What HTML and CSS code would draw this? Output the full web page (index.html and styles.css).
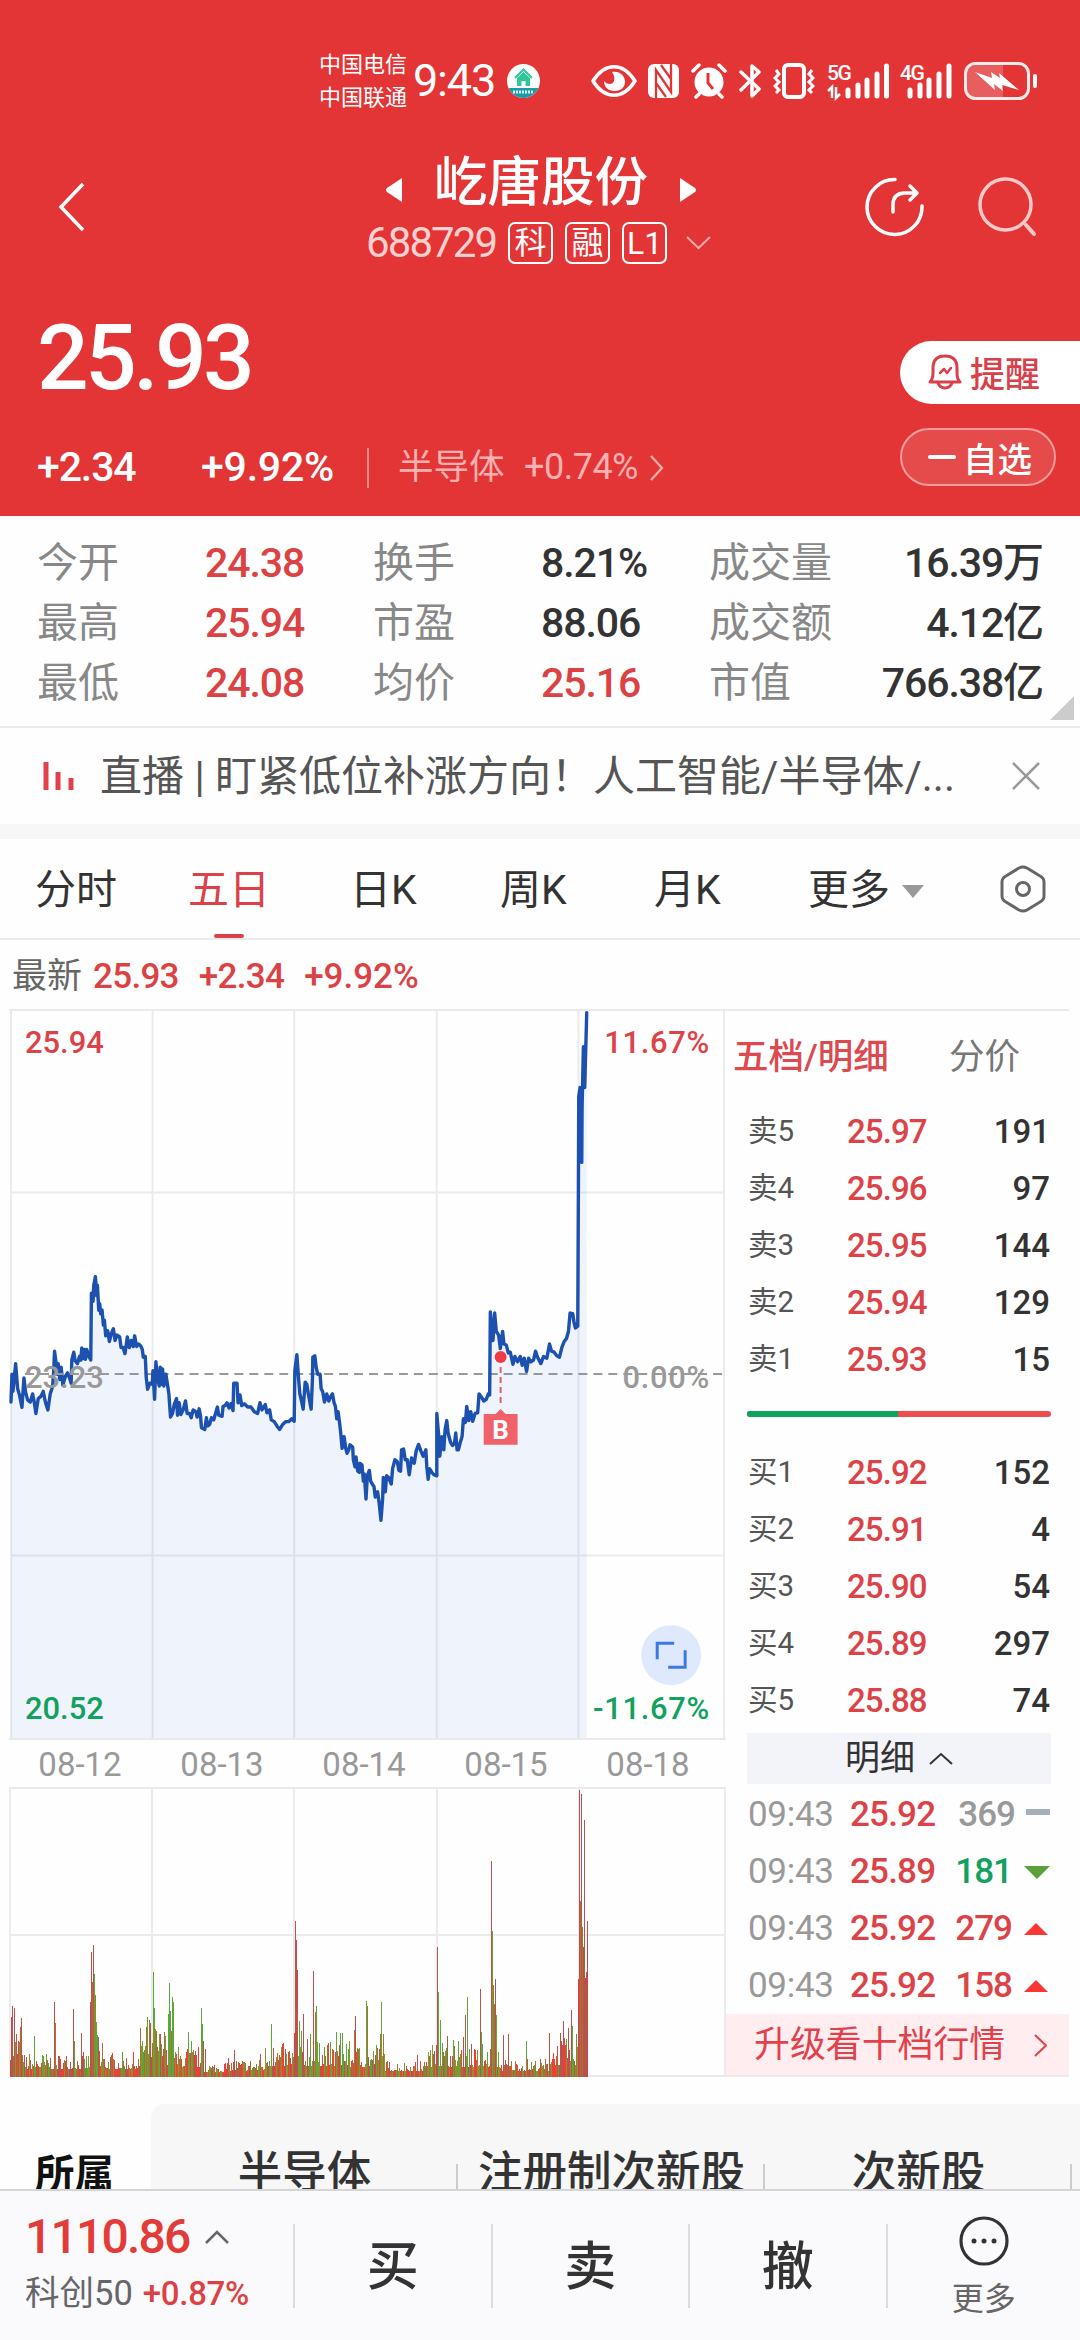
FILE: index.html
```html
<!DOCTYPE html>
<html lang="zh-CN">
<head>
  <meta charset="utf-8">
  <title>屹唐股份 688729</title>
  <link rel="stylesheet" href="styles.css">
</head>
<body>

<header class="top">
  <div class="status">
    <div class="carriers"><span>中国电信</span><span>中国联通</span></div>
    <span class="clock">9:43</span>
    <svg class="app-dot" width="33" height="34" viewBox="0 0 33 34">
      <clipPath id="dot"><ellipse cx="16.5" cy="17" rx="16.5" ry="17"/></clipPath>
      <g clip-path="url(#dot)">
        <rect width="33" height="34" fill="#fff"/>
        <rect y="24" width="33" height="10" fill="#1c9aa8"/>
        <path d="M8 14l8.500-8.500L25 14" fill="none" stroke="#2fc79a" stroke-width="2"/>
        <path d="M10 14l6.500-6 6.500 6v8h-4.500v-5h-4v5H10z" fill="#2fc79a"/>
        <path d="M6 28h21" stroke="#d8f3f3" stroke-width="3" stroke-dasharray="2 1"/>
      </g>
    </svg>
    <div class="sys-icons">
      <svg width="46" height="34" viewBox="0 0 46 34">
        <path d="M2 17C14-2 32-2 44 17 32 36 14 36 2 17z" fill="none" stroke="#fff" stroke-width="3.500" stroke-linejoin="round"/>
        <path d="M21 8c8-1 13 4 13 10 0 5-4 9-10 9-7 0-11-4-11-10 3 4 9 4 10 0 1-3 0-6-2-9z" fill="#fff"/>
      </svg>
      <svg width="31" height="34" viewBox="0 0 31 34">
        <rect width="31" height="34" rx="6" fill="#fff"/>
        <path d="M8 34V6l15 22V0M8 19l10 14M13 1l10 14" fill="none" stroke="#e33536" stroke-width="2.300"/>
      </svg>
      <svg width="36" height="36" viewBox="0 0 36 36">
        <circle cx="18" cy="19" r="14.500" fill="#fff"/>
        <path d="M2 8l6-6M34 8l-6-6M8 31l-3 3M28 31l3 3" stroke="#fff" stroke-width="3.500" stroke-linecap="round"/>
        <path d="M17 10v10l5 6" fill="none" stroke="#e33536" stroke-width="3"/>
      </svg>
      <svg width="23" height="36" viewBox="0 0 23 36">
        <path d="M2 9l18 17-7 7V3l7 6L2 27" fill="none" stroke="#fff" stroke-width="3.500" stroke-linejoin="round" stroke-linecap="round"/>
      </svg>
      <svg width="42" height="36" viewBox="0 0 42 36">
        <rect x="11" y="2" width="20" height="32" rx="4" fill="none" stroke="#fff" stroke-width="4"/>
        <path d="M3 7l3 4-4 4 4 4-4 4 4 4-3 3M39 7l-3 4 4 4-4 4 4 4-4 4 3 3" fill="none" stroke="#fff" stroke-width="3"/>
      </svg>
      <svg class="signal" width="62" height="36" viewBox="0 0 62 36">
        <text x="0" y="17" class="net">5G</text>
        <path d="M1 28l4-4v11M9 24v11l4-4" fill="none" stroke="#fff" stroke-width="2.500"/>
        <path d="M21 33v-6M31 33v-11M40 33v-16M50 33v-22M59.500 33v-30" stroke="#fff" stroke-width="5" stroke-linecap="round"/>
      </svg>
      <svg class="signal" width="52" height="36" viewBox="0 0 52 36">
        <text x="0" y="17" class="net">4G</text>
        <path d="M10 33v-6M20 33v-11M29 33v-16M39 33v-22M49 33v-30" stroke="#fff" stroke-width="5" stroke-linecap="round"/>
      </svg>
      <svg width="73" height="38" viewBox="0 0 73 38">
        <path d="M12 3h27v32H12q-9 0-9-9V12q0-9 9-9z" fill="#fff" fill-opacity=".2"/>
        <rect x="1.500" y="1.500" width="63" height="35" rx="10" fill="none" stroke="#fff" stroke-opacity=".9" stroke-width="3"/>
        <path d="M11 10l17 6-1-6 9 6-1-5 20 17-17-5 1 6-9-7 1 6z" fill="#fff"/>
        <path d="M71 14v10" stroke="#fff" stroke-width="4" stroke-linecap="round"/>
      </svg>
    </div>
  </div>

  <nav class="nav">
    <svg class="back" width="30" height="50" viewBox="0 0 30 50"><path d="M26 2L4 25l22 23" fill="none" stroke="#fff" stroke-width="3.500"/></svg>
    <div class="stock">
      <div class="stock-name">
        <svg width="18" height="26" viewBox="0 0 18 26"><path d="M17 1v24L2 15q-2-2 0-4z" fill="#fff"/></svg>
        <h1>屹唐股份</h1>
        <svg width="18" height="26" viewBox="0 0 18 26"><path d="M1 1v24l15-10q2-2 0-4z" fill="#fff"/></svg>
      </div>
      <div class="stock-code">
        <span class="code">688729</span>
        <span class="tag">科</span><span class="tag">融</span><span class="tag">L1</span>
        <svg width="25" height="14" viewBox="0 0 25 14"><path d="M1 1l11.500 11L24 1" fill="none" stroke="#f6a9a9" stroke-width="2"/></svg>
      </div>
    </div>
    <svg class="share" width="60" height="60" viewBox="0 0 60 60">
      <path d="M30 2.500A27.500 27.500 0 1 0 57 29M28 35V28q0-12 12-12h11M45 9l7 7-7 7" fill="none" stroke="#fff" stroke-width="3.500" stroke-linecap="round" stroke-linejoin="round"/>
    </svg>
    <svg class="search" width="60" height="60" viewBox="0 0 60 60">
      <circle cx="27.500" cy="27.500" r="25.500" fill="none" stroke="#ffc9c9" stroke-width="3.500"/>
      <path d="M48 48l8 9" stroke="#ffc9c9" stroke-width="4" stroke-linecap="round"/>
    </svg>
  </nav>

  <div class="quote">
    <div>
      <div class="price">25.93</div>
      <div class="change">
        <span class="diff">+2.34</span>
        <span class="pct">+9.92%</span>
        <span class="sector">半导体</span>
        <span class="sector-pct">+0.74%</span>
        <svg width="14" height="26" viewBox="0 0 14 26"><path d="M1 1l11 12L1 25" fill="none" stroke="#ffb0b0" stroke-width="2.200"/></svg>
      </div>
    </div>
    <div class="actions">
      <button class="remind">
        <svg width="34" height="36" viewBox="0 0 34 36" fill="none" stroke="#d8404a" stroke-width="3" stroke-linejoin="round" stroke-linecap="round">
          <path d="M2 28q3-3 3-9v-5Q5 2 17 2t12 12v5q0 6 3 9z"/><path d="M10 29q2 5 7 5t7-5"/><path d="M12 19l4-4 3 4 4-5" stroke-width="2.500"/>
        </svg>提醒
      </button>
      <button class="fav"><i></i>自选</button>
    </div>
  </div>
</header>

<section class="stats">
  <span>今开</span><b class="up">24.38</b><span>换手</span><b>8.21%</b><span>成交量</span><b class="end">16.39万</b>
  <span>最高</span><b class="up">25.94</b><span>市盈</span><b>88.06</b><span>成交额</span><b class="end">4.12亿</b>
  <span>最低</span><b class="up">24.08</b><span>均价</span><b class="up">25.16</b><span>市值</span><b class="end">766.38亿</b>
  <i class="corner"></i>
</section>

<section class="live">
  <svg width="32" height="30" viewBox="0 0 32 30"><path d="M3 1v28M15 11v18M28 17v12" stroke="#e2414b" stroke-width="5"/></svg>
  <p>直播 | 盯紧低位补涨方向！人工智能/半导体/...</p>
  <svg class="close" width="28" height="28" viewBox="0 0 28 28"><path d="M1 1l26 26M27 1L1 27" stroke="#999" stroke-width="2.500"/></svg>
</section>

<nav class="tabs">
  <span>分时</span>
  <span class="active">五日</span>
  <span>日K</span>
  <span>周K</span>
  <span>月K</span>
  <span>更多<i></i></span>
  <svg width="46" height="48" viewBox="0 0 46 48" fill="none" stroke="#666" stroke-width="3"><path d="M19 3q4-2 8 0l13 8q4 2 4 6v14q0 4-4 6l-13 8q-4 2-8 0L6 37q-4-2-4-6V17q0-4 4-6z"/><circle cx="23" cy="24" r="6.500"/></svg>
</nav>

<div class="latest">最新<b>25.93</b><b>+2.34</b><b>+9.92%</b></div>

<main class="board">
  <div class="charts">
    <svg class="chart" width="717" height="729" viewBox="0 0 717 729">
      <g class="grid">
        <path d="M1 0v729M143 0v729M285 0v729M428 0v729M570 0v729M716 0v729M0 182h717M0 546h717"/>
      </g>
      <path class="mid" d="M15 364H717"/>
      <g transform="scale(.33333 .35714) translate(-27 -30)">
        <polygon id="area" class="area"/>
        <polyline id="line" class="line"/>
      </g>
      <path class="mid" d="M15 364H105"/>
      <path d="M492 357v37" class="buy-stem"/>
      <circle cx="492" cy="347" r="6" fill="#f03a45"/>
      <path d="M475 404h12l5-5 5 5h12v31h-34z" fill="#f0616a"/>
      <text x="492" y="429" class="buy">B</text>
      <text x="15" y="42" class="t-up">25.94</text>
      <text x="702" y="42" class="t-up r">11.67%</text>
      <text x="15" y="378" class="t-mid">23.23</text>
      <text x="702" y="378" class="t-mid r">0.00%</text>
      <text x="15" y="710" class="t-down">20.52</text>
      <text x="702" y="710" class="t-down r">-11.67%</text>
      <circle cx="663" cy="646" r="30" fill="#dfe9fd"/>
      <path d="M649 650v-16h17M677 641v17h-17" fill="none" stroke="#3a78e6" stroke-width="3"/>
    </svg>
    <div class="dates"><span>08-12</span><span>08-13</span><span>08-14</span><span>08-15</span><span>08-18</span></div>
    <svg id="volume" class="volume" width="717" height="288" viewBox="0 0 717 288">
      <path class="grid" d="M1 0v288M143 0v288M285 0v288M428 0v288M570 0v288M716 0v288M0 146h717"/>
    </svg>
  </div>

  <aside class="book">
    <div class="book-tabs"><span class="active">五档/明细</span><span>分价</span></div>
    <div class="level"><span>卖5</span><b>25.97</b><em>191</em></div>
    <div class="level"><span>卖4</span><b>25.96</b><em>97</em></div>
    <div class="level"><span>卖3</span><b>25.95</b><em>144</em></div>
    <div class="level"><span>卖2</span><b>25.94</b><em>129</em></div>
    <div class="level"><span>卖1</span><b>25.93</b><em>15</em></div>
    <div class="ratio"><i></i></div>
    <div class="level"><span>买1</span><b>25.92</b><em>152</em></div>
    <div class="level"><span>买2</span><b>25.91</b><em>4</em></div>
    <div class="level"><span>买3</span><b>25.90</b><em>54</em></div>
    <div class="level"><span>买4</span><b>25.89</b><em>297</em></div>
    <div class="level"><span>买5</span><b>25.88</b><em>74</em></div>
    <div class="detail-bar">明细<svg width="24" height="13" viewBox="0 0 24 13"><path d="M1 12L12 2l11 10" fill="none" stroke="#333" stroke-width="2"/></svg></div>
    <div class="tick flat"><span>09:43</span><b>25.92</b><em>369</em><i></i></div>
    <div class="tick down"><span>09:43</span><b>25.89</b><em>181</em><i></i></div>
    <div class="tick rise"><span>09:43</span><b>25.92</b><em>279</em><i></i></div>
    <div class="tick rise"><span>09:43</span><b>25.92</b><em>158</em><i></i></div>
    <div class="upgrade">升级看十档行情<svg width="13" height="23" viewBox="0 0 13 23"><path d="M1 1l11 10.500L1 22" fill="none" stroke="#e2414b" stroke-width="2"/></svg></div>
  </aside>
</main>

<section class="belong">
  <strong>所属</strong>
  <div class="sectors"><span>半导体</span><span>注册制次新股</span><span>次新股</span></div>
</section>

<footer class="bottom">
  <div class="index">
    <div class="index-value">1110.86<svg width="24" height="14" viewBox="0 0 24 14"><path d="M1 13L12 2l11 11" fill="none" stroke="#666" stroke-width="2.500"/></svg></div>
    <div class="index-name">科创50<b>+0.87%</b></div>
  </div>
  <span class="trade">买</span>
  <span class="trade">卖</span>
  <span class="trade">撤</span>
  <div class="more">
    <svg width="50" height="50" viewBox="0 0 50 50"><circle cx="25" cy="25" r="23" fill="none" stroke="#333" stroke-width="3.200"/><g fill="#333"><circle cx="15" cy="25" r="2.500"/><circle cx="25" cy="25" r="2.500"/><circle cx="35" cy="25" r="2.500"/></g></svg>
    <span>更多</span>
  </div>
</footer>

<script src="chart.js"></script>
</body>
</html>
```
FILE: styles.css
```css
* {
  box-sizing: border-box;
}
body {
  margin: 0;
  width: 1080px;
  height: 2340px;
  overflow: hidden;
  display: flex;
  flex-direction: column;
  background: #fefefe;
  color: #333;
  font-family: Roboto, "Noto Sans CJK SC", sans-serif;
  font-size: 41px;
  line-height: 1.2;
}
svg {
  display: block;
  flex: none;
}
b, em, i {
  font-style: normal;
  font-weight: 500;
}
button {
  border: 0;
  margin: 0;
  font-family: inherit;
}

/* header */
.top {
  height: 516px;
  flex: none;
  background: #e33536;
  color: #fff;
}
.status {
  height: 151px;
  padding: 10px 43px 0 319px;
  display: flex;
  align-items: center;
}
.carriers {
  display: flex;
  flex-direction: column;
  width: 94px;
  font-size: 22px;
  line-height: 33px;
}
.clock {
  width: 94px;
  font-size: 45px;
  letter-spacing: -1.2px;
}
.sys-icons {
  display: flex;
  align-items: center;
  gap: 11.600px;
  margin-left: auto;
}
.signal {
  overflow: visible;
}
.net {
  font: 500 21px Roboto;
  fill: #fff;
  letter-spacing: -1.5px;
}

.nav {
  height: 122px;
  display: flex;
  align-items: center;
}
.back {
  margin: -10px 0 0 57px;
}
.stock {
  width: 456px;
  margin-left: 226px;
}
.stock-name {
  height: 62px;
  display: flex;
  align-items: center;
  justify-content: center;
  gap: 31px;
}
.stock-name svg {
  margin-top: 15px;
}
.stock-name h1 {
  margin: 0;
  padding-top: 2px;
  font-size: 53.500px;
  font-weight: 500;
  line-height: 62px;
}
.stock-code {
  height: 60px;
  padding-left: 53px;
  display: flex;
  align-items: center;
}
.code {
  width: 142px;
  color: #ffd0d0;
  font-size: 42px;
  letter-spacing: -1.900px;
}
.tag {
  width: 45px;
  height: 42px;
  margin-right: 12px;
  border: 2px solid #fff;
  border-radius: 7px;
  font-size: 32px;
  line-height: 38px;
  text-align: center;
}
.stock-code svg {
  margin-left: 7px;
}
.share {
  margin: -10px 0 0 96px;
}
.search {
  margin: -10px 0 0 53px;
}

.quote {
  padding: 33px 0 0 37px;
  display: flex;
  justify-content: space-between;
}
.price {
  height: 100px;
  padding-top: 2px;
  font-size: 91px;
  font-weight: 500;
  line-height: 100px;
  letter-spacing: -3.600px;
}
.change {
  height: 44px;
  margin-top: 40px;
  display: flex;
  align-items: center;
  font-size: 41px;
  font-weight: 500;
  letter-spacing: -1.100px;
}
.diff {
  width: 164px;
}
.pct {
  width: 166px;
  letter-spacing: -.2px;
}
.sector {
  height: 40px;
  width: 157px;
  padding-left: 29px;
  border-left: 2px solid #f09090;
  color: #ffb0b0;
  font-size: 35.500px;
  font-weight: 400;
  line-height: 39px;
  letter-spacing: 0;
}
.sector-pct {
  width: 126px;
  color: #ffb0b0;
  font-size: 36px;
  font-weight: 400;
  letter-spacing: -.5px;
}
.actions {
  width: 180px;
  padding-top: 35px;
}
.remind {
  width: 180px;
  height: 63px;
  padding: 0 0 2px 28px;
  display: flex;
  align-items: center;
  gap: 8px;
  border-radius: 32px 0 0 32px;
  background: #fff;
  color: #d8404a;
  font-size: 35px;
  font-weight: 500;
}
.fav {
  width: 156px;
  height: 58px;
  margin-top: 24px;
  padding: 0 0 1px 26px;
  display: flex;
  align-items: center;
  gap: 7px;
  border: 2px solid #f29c9c;
  border-radius: 29px;
  background: #e64b4c;
  color: #fff;
  font-size: 34.500px;
  font-weight: 500;
}
.fav i {
  width: 28px;
  height: 4px;
  border-radius: 2px;
  background: #fff;
}

/* key figures */
.stats {
  position: relative;
  height: 212px;
  flex: none;
  padding: 17px 37px 0 37px;
  display: grid;
  grid-template-columns: 168px 168px 168px 168px 140px 1fr;
  grid-auto-rows: 60px;
  line-height: 60px;
  border-bottom: 2px solid #ececec;
}
.stats span {
  color: #888;
}
.stats b {
  letter-spacing: -1.100px;
}
.stats .end {
  text-align: right;
  white-space: nowrap;
}
.up {
  color: #dc4244;
}
.corner {
  position: absolute;
  right: 6px;
  bottom: 6px;
  border-left: 24px solid transparent;
  border-bottom: 24px solid #ccc;
}

.live {
  height: 96px;
  flex: none;
  padding: 0 40px 0 43px;
  display: flex;
  align-items: center;
  color: #555;
}
.live p {
  margin: 3px 0 0 25px;
  font-size: 42px;
  white-space: nowrap;
}
.close {
  margin-left: auto;
}

.tabs {
  height: 116px;
  flex: none;
  padding-left: 35px;
  display: grid;
  grid-template-columns: 153px 162px 150px 154px 154px auto 1fr;
  justify-items: start;
  border-top: 15px solid #f7f7f7;
  border-bottom: 2px solid #eaeaea;
  line-height: 103px;
}
.tabs span {
  height: 99px;
}
.tabs .active {
  color: #dc4048;
  display: flex;
  flex-direction: column;
  align-items: center;
}
.tabs .active::after {
  content: "";
  width: 30px;
  height: 4px;
  margin-top: -8px;
  border-radius: 2px;
  background: #dc4048;
}
.tabs i {
  display: inline-block;
  margin-left: 12px;
  vertical-align: 6px;
  border: 11px solid transparent;
  border-top: 13px solid #999;
  border-bottom: 0;
}
.tabs svg {
  margin: 26px 34px 0 auto;
}

.latest {
  height: 69px;
  flex: none;
  padding-left: 12px;
  color: #666;
  font-size: 35px;
  line-height: 73px;
}
.latest b {
  margin: 0 9px 0 11px;
  color: #dc4244;
  letter-spacing: -.7px;
}
.latest b:last-child {
  letter-spacing: 0;
}

/* chart and order book */
.board {
  height: 1068px;
  flex: none;
  margin: 0 11px 0 9px;
  display: flex;
  border-top: 2px solid #eaeaea;
  border-bottom: 2px solid #eaeaea;
}
.charts {
  width: 717px;
}
.chart {
  height: 727px;
}
.grid {
  fill: none;
  stroke: #ebebeb;
  stroke-width: 2;
}
.area {
  fill: #1c5fe0;
  fill-opacity: .07;
}
.line {
  fill: none;
  stroke: #1c51b0;
  stroke-width: 3.400;
  stroke-linejoin: round;
  stroke-linecap: round;
  vector-effect: non-scaling-stroke;
}
.mid {
  stroke: #999;
  stroke-width: 2;
  stroke-dasharray: 9 6;
}
.buy-stem {
  stroke: #e0616a;
  stroke-width: 2;
  stroke-dasharray: 6 4;
}
.buy {
  font: 700 26px Roboto;
  fill: #fff;
  text-anchor: middle;
}
.t-up, .t-mid, .t-down {
  font: 500 31px Roboto;
}
.t-up { fill: #dc4348; }
.t-mid { fill: #999; }
.t-down { fill: #12a15e; }
.r {
  text-anchor: end;
  letter-spacing: .7px;
}
.dates {
  height: 51px;
  display: grid;
  grid-template-columns: repeat(5, 142px);
  border-top: 2px solid #eaeaea;
  border-bottom: 2px solid #eaeaea;
  color: #999;
  font-size: 33px;
  line-height: 49px;
  text-align: center;
}

.book {
  flex: 1;
}
.book-tabs {
  height: 92px;
  padding: 0 49px 0 7px;
  display: flex;
  justify-content: space-between;
  font-size: 35.500px;
  line-height: 93px;
  color: #777;
}
.book-tabs .active {
  color: #dc4a50;
  font-weight: 500;
}
.level {
  height: 57px;
  margin: 0 19px 0 22px;
  display: grid;
  grid-template-columns: 99px 1fr 90px;
  font-size: 33px;
  line-height: 57px;
}
.level span {
  color: #555;
  font-size: 29.500px;
}
.level b {
  color: #dc4348;
  letter-spacing: -.9px;
}
.level em {
  text-align: right;
}
.ratio {
  height: 6px;
  margin: 23px 18px 27px 21px;
  border-radius: 3px;
  background: #ee4d50;
}
.ratio i {
  display: block;
  width: 151px;
  height: 6px;
  border-radius: 3px 0 0 3px;
  background: #0fa35f;
}
.detail-bar {
  height: 51px;
  margin: 4px 18px 2px 21px;
  display: flex;
  align-items: center;
  justify-content: center;
  gap: 14px;
  background: #f3f4f9;
  font-size: 35px;
}
.tick {
  height: 57px;
  margin: 0 18px 0 22px;
  display: grid;
  grid-template-columns: 102px 96px 66px 38px;
  font-size: 35px;
  line-height: 57px;
}
.tick span {
  color: #999;
  letter-spacing: -.3px;
}
.tick b {
  color: #dc4348;
  letter-spacing: -.8px;
}
.tick em {
  text-align: right;
  letter-spacing: -1px;
}
.tick i {
  margin: 23px 0 0 auto;
  align-self: start;
}
.tick.flat em {
  margin-right: -3px;
  color: #999;
}
.flat i {
  width: 24px;
  height: 6px;
  background: #a5afb9;
}
.down em { color: #12a15e; }
.down i {
  border: 13px solid transparent;
  border-top: 13px solid #5ba13a;
  border-bottom: 0;
}
.rise em { color: #dc4348; }
.rise i {
  margin-right: 2px;
  border: 12px solid transparent;
  border-bottom: 12px solid #fb3735;
  border-top: 0;
}
.upgrade {
  height: 61px;
  padding: 2px 22px 0 28px;
  display: flex;
  align-items: center;
  justify-content: space-between;
  background: #ffedef;
  color: #e2414b;
  font-size: 35.900px;
}

/* sector strip, cut off by the footer */
.belong {
  height: 112px;
  flex: none;
  padding: 27px 0 0 35px;
  display: flex;
  overflow: hidden;
}
.belong strong {
  width: 116px;
  flex: none;
  color: #111;
  font-size: 39.500px;
  line-height: 142px;
}
.sectors {
  flex: none;
  width: 929px;
  height: 140px;
  display: flex;
  border-radius: 14px 0 0 0;
  background: #f7f7f7;
  font-size: 44.500px;
  font-weight: 500;
  line-height: 139px;
}
.sectors span {
  width: 307px;
  text-align: center;
  background: linear-gradient(#ccc, #ccc) right 60px / 2px 50px no-repeat;
}

.bottom {
  height: 151px;
  flex: none;
  display: flex;
  align-items: center;
  border-top: 2px solid #d5d5d8;
  background: #fafafc;
}
.index {
  width: 293px;
  padding-left: 25px;
}
.index-value {
  height: 56px;
  display: flex;
  align-items: center;
  gap: 16px;
  color: #e33b38;
  font-size: 48px;
  font-weight: 500;
  letter-spacing: -1.800px;
}
.index-name {
  height: 58px;
  color: #66666a;
  font-size: 34.500px;
  line-height: 56px;
  white-space: nowrap;
}
.index-name b {
  margin-left: 10px;
  color: #dc4244;
  font-size: 33px;
  letter-spacing: -.3px;
}
.trade {
  width: 197.500px;
  height: 84px;
  border-left: 2px solid #dcdce0;
  font-size: 52px;
  font-weight: 500;
  line-height: 87px;
  text-align: center;
}
.more {
  flex: 1;
  height: 84px;
  display: flex;
  flex-direction: column;
  align-items: center;
  border-left: 2px solid #dcdce0;
  color: #666;
  font-size: 32px;
}
.more svg {
  margin-top: -8px;
}
.more span {
  margin-top: 14px;
}
```
FILE: chart.js
```js
// price trace, two halves of the panel in "x,y" pairs
var first = '30,1128 33,1050 36,1098 44,1020 50,1090 56,1110 63,1143 69,1060 74,1100 80,1122 88,1128 95,1105 100,1128 105,1160 112,1118 120,1112 127,1098 134,1130 141,1150 148,1105 155,1085 158,1050 161,985 166,1020 169,1050 172,1020 177,1065 181,1030 186,1080 194,1055 200,1046 206,1060 211,1075 213,1010 219,988 223,1012 230,1020 236,1000 240,1010 243,976 247,1006 251,980 254,1008 258,980 264,1000 270,1010 272,822 277,845 279,800 284,776 288,830 290,800 294,870 297,852 300,880 304,870 308,912 311,898 315,942 321,928 326,958 332,935 338,922 343,955 349,940 357,945 361,975 367,975 373,992 380,945 386,975 392,955 398,972 402,942 408,972 414,965 420,970 425,980 428,1002 434,1000 437,1060 441,1092 448,1075 455,1078 457,1040 462,1120 466,1015 470,1055 476,1083 479,1030 483,1078 486,1035 490,1083 496,1050 501,1080 505,1105 510,1170 516,1160 521,1135 528,1118 531,1165 536,1130 541,1163 548,1150 555,1125 560,1160 567,1160 572,1172 578,1150 586,1155 590,1170 596,1147 600,1165 603,1200 613,1205 618,1172 622,1195 628,1190 633,1172 640,1178 646,1158 651,1142 655,1165 665,1168 668,1140 674,1138 680,1130 686,1145 692,1132 698,1152 700,1075 710,1075 713,1130 719,1108 724,1138 732,1133 742,1142 752,1142 762,1155 772,1160 779,1130 785,1150 795,1135 800,1158 808,1150 813,1178 822,1183 830,1195 838,1205 848,1190 856,1183 866,1183 874,1175 882,1182 884,1040 890,995 895,1060 899,1105 904,1125 909,1148 915,1072 920,1078 925,1108 933,1148 937,1060 938,1002 944,998 948,1030 953,1050 960,1050 963,1090 968,1100 973,1128 980,1105 986,1125 992,1112 997,1105 1002,1130 1006,1140 1010,1175 1014,1155 1019,1190 1023,1225 1026,1258 1032,1225 1037,1258 1041,1272 1046,1262 1050,1248 1058,1255 1060,1290 1065,1310 1068,1282 1073,1322 1078,1325';
var second = '0,1300 6,1305 10,1350 13,1330 18,1400 22,1335 28,1320 32,1350 38,1360 42,1365 46,1395 53,1380 58,1415 63,1460 68,1400 70,1340 76,1380 80,1335 86,1340 94,1358 98,1315 105,1290 112,1295 117,1320 122,1322 125,1262 131,1260 136,1290 142,1290 148,1332 155,1285 163,1300 169,1265 176,1247 183,1265 190,1280 198,1262 201,1310 205,1345 209,1315 216,1325 222,1332 231,1335 231,1160 236,1215 240,1280 246,1225 252,1262 256,1205 261,1180 265,1215 272,1240 278,1250 284,1245 288,1215 292,1262 296,1262 302,1240 307,1225 311,1175 317,1185 321,1140 327,1180 333,1155 339,1182 346,1160 354,1158 358,1105 366,1115 372,1125 380,1120 386,1105 390,1108 392,875 396,920 400,955 405,878 410,930 417,940 422,978 429,930 433,965 440,968 446,990 452,988 460,1022 466,1000 474,1015 482,1000 488,1025 494,1005 501,1042 507,1005 514,1015 522,1010 528,985 534,1002 544,1020 552,1000 562,1005 570,965 576,985 584,988 592,998 600,1002 607,975 614,958 621,950 627,930 632,878 640,880 644,905 648,920 655,915 657,520 658,270 662,245 667,455 668,300 672,130 676,245 682,35';

var pts = first + ' ' + second.split(' ').map(function (p) {
  var xy = p.split(',');
  return (+xy[0] + 1080) + ',' + xy[1];
}).join(' ');
document.getElementById('line').setAttribute('points', pts);
document.getElementById('area').setAttribute('points', pts + ' 1762,2071 30,2071');

// volume: usual level up to x, then single peaks [x, height, colour]
var levels = [[22, 46], [90, 20], [100, 46], [140, 20], [165, 42], [200, 26], [225, 12], [265, 15], [295, 28], [350, 29], [385, 26], [425, 13], [470, 27], [500, 25], [550, 15], [578, 32], [588, 95]];
var colors = { r: '#ba514b', g: '#5aa83a', b: '#a8742f' };
var peaks = [
  [11, 60, 'r'], [12, 71, 'r'], [14, 69, 'r'], [21, 59, 'r'], [34, 41, 'g'], [54, 75, 'r'], [55, 54, 'b'], [73, 68, 'r'], [74, 36, 'g'], [81, 44, 'r'],
  [90, 75, 'r'], [91, 125, 'r'], [92, 95, 'b'], [93, 132, 'r'], [94, 103, 'g'], [95, 82, 'b'], [96, 55, 'g'], [97, 42, 'g'], [102, 34, 'b'],
  [142, 36, 'g'], [146, 50, 'b'], [147, 60, 'g'], [149, 57, 'b'], [150, 54, 'r'], [153, 105, 'g'], [154, 69, 'g'], [155, 48, 'b'], [160, 43, 'r'], [165, 41, 'g'],
  [168, 63, 'g'], [169, 94, 'g'], [170, 66, 'g'], [171, 46, 'b'], [172, 80, 'g'], [173, 75, 'g'], [188, 45, 'g'], [191, 36, 'g'], [201, 69, 'g'], [202, 53, 'g'], [203, 36, 'r'], [205, 28, 'r'],
  [234, 27, 'r'], [260, 23, 'r'], [271, 53, 'g'], [273, 29, 'r'], [294, 44, 'r'], [295, 156, 'r'], [296, 137, 'r'], [297, 107, 'r'], [299, 56, 'g'], [301, 46, 'g'], [303, 63, 'r'],
  [307, 38, 'r'], [310, 43, 'g'], [313, 106, 'r'], [315, 65, 'b'], [316, 71, 'g'], [319, 34, 'g'], [324, 30, 'g'], [336, 45, 'g'], [340, 44, 'g'], [342, 44, 'g'], [346, 33, 'g'],
  [354, 47, 'b'], [355, 61, 'r'], [359, 29, 'g'], [366, 76, 'g'], [367, 71, 'b'], [376, 32, 'g'], [380, 43, 'b'], [381, 75, 'g'], [383, 43, 'b'], [417, 22, 'r'], [434, 26, 'r'],
  [436, 32, 'r'], [437, 130, 'r'], [438, 85, 'g'], [440, 57, 'g'], [442, 34, 'g'], [447, 41, 'r'], [453, 37, 'g'], [458, 36, 'g'], [463, 40, 'r'], [465, 62, 'r'], [467, 80, 'g'],
  [471, 33, 'r'], [480, 88, 'r'], [481, 45, 'g'], [482, 33, 'g'], [491, 216, 'r'], [492, 146, 'g'], [493, 92, 'b'], [494, 73, 'b'], [495, 98, 'r'], [496, 62, 'g'],
  [503, 42, 'r'], [508, 43, 'r'], [526, 36, 'g'], [549, 44, 'r'], [560, 44, 'r'], [563, 56, 'r'], [568, 49, 'r'], [571, 67, 'r'], [572, 51, 'g'], [576, 43, 'b'],
  [578, 56, 'r'], [579, 287, 'r'], [580, 176, 'b'], [581, 283, 'r'], [582, 150, 'b'], [583, 130, 'r'], [584, 257, 'r'], [585, 99, 'r'], [586, 105, 'r'], [587, 156, 'r']
];

var svg = document.getElementById('volume');
var seed = 7;
function rnd() {
  seed = (seed * 16807) % 2147483647;
  return seed / 2147483647;
}
function bar(x, h, c) {
  var r = document.createElementNS('http://www.w3.org/2000/svg', 'rect');
  r.setAttribute('x', x - 9);
  r.setAttribute('y', 288 - h);
  r.setAttribute('width', 1);
  r.setAttribute('height', h);
  r.setAttribute('fill', c);
  svg.appendChild(r);
}
var base = ['#fb3a35', '#e0443a', '#5ba535', '#8b9433', '#a8702f', '#ba514b'];
var li = 0;
for (var x = 10; x < 588; x++) {
  while (x >= levels[li][0]) li++;
  var k = rnd();
  bar(x, Math.round(levels[li][1] * (0.35 + 0.85 * k * k)) + 1, base[Math.floor(rnd() * base.length)]);
}
peaks.forEach(function (p) {
  bar(p[0], p[1], colors[p[2]]);
});
```
